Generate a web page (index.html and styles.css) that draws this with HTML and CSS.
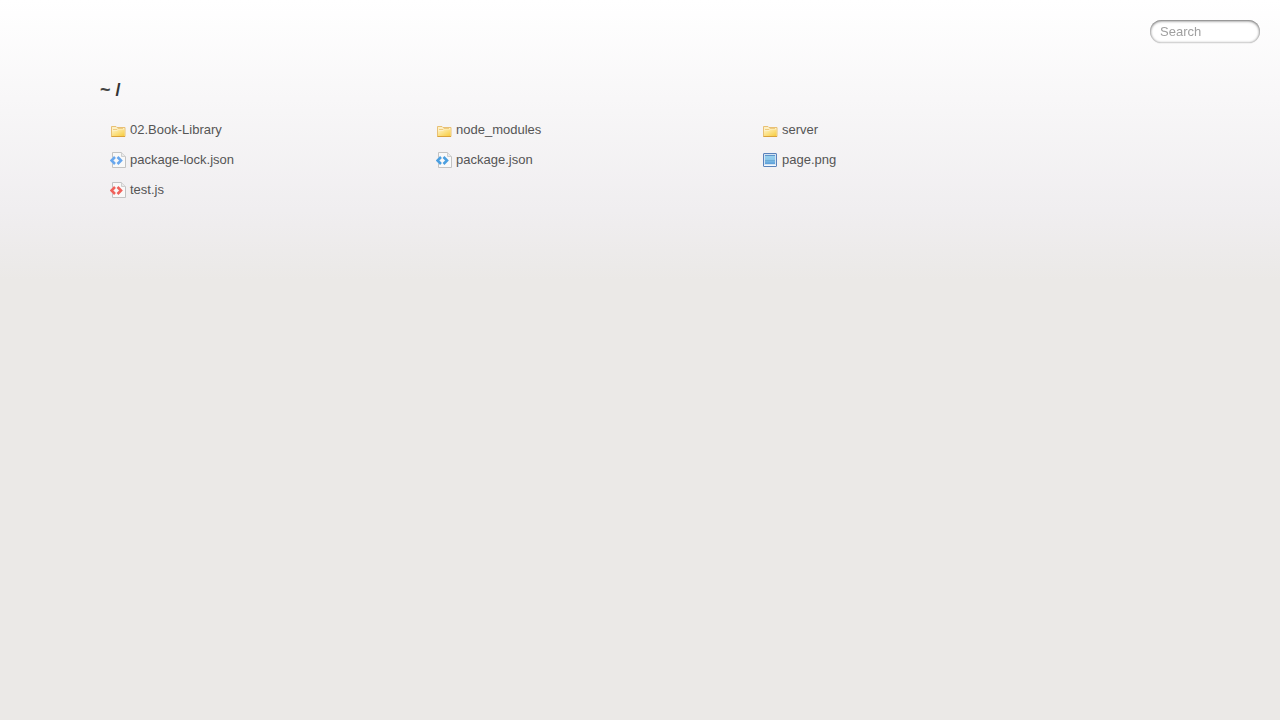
FILE: index.html
```html
<!DOCTYPE html>
<html lang="en">
<head>
<meta charset="utf-8">
<title>listing directory /</title>
<link rel="stylesheet" href="styles.css">
</head>
<body>
<svg class="sprites" aria-hidden="true">
  <defs>
    <linearGradient id="gold" x1="0" y1="0" x2="1" y2="1"><stop offset="0" stop-color="#fff3c4"/><stop offset="1" stop-color="#f7cc3e"/></linearGradient>
    <linearGradient id="sky" x1="0" y1="0" x2="0" y2="1"><stop offset="0" stop-color="#9bd3ef"/><stop offset=".5" stop-color="#8cc8ea"/><stop offset="1" stop-color="#5b9dd8"/></linearGradient>
    <symbol id="folder" viewBox="0 0 16 16">
      <path d="M1.500 14.500v-10h4.500l1 1h8v9z" fill="#fdf0c4" stroke="#e8c075"/>
      <path d="M3 7.500h4l1-1h5" fill="none" stroke="#eecb80"/>
      <path d="M2 14V9h5l1.500-1.500H14.500V14z" fill="url(#gold)"/>
      <path d="M1.500 14.500h13.500" stroke="#dba23a"/>
    </symbol>
    <symbol id="code" viewBox="0 0 16 16">
      <path d="M2.500.5h9l4 4v11h-13z" fill="#f9f9f9" stroke="#c3c3c3"/>
      <path d="M11.500.5v4h4" fill="#e9e9e9" stroke="#cfcfcf"/>
      <path d="M5 3v11L0 8.500z" fill="#f5f4f5"/>
      <path d="M5 5L1.500 8.500 5 12M7.500 5L11 8.500 7.500 12" fill="none" stroke="currentColor" stroke-width="2.600"/>
    </symbol>
    <symbol id="image" viewBox="0 0 16 16">
      <rect x="1.500" y="1.500" width="13" height="13" rx=".5" fill="#d3e3f3" stroke="#5a82bb"/>
      <path d="M3 3h10v9H3z" fill="url(#sky)"/>
      <path d="M3 3.500h10" stroke="#5f95ca"/>
      <path d="M3 8h10v1H3z" fill="#6dabd6"/>
      <path d="M2 13.500h12" stroke="#f4f9fd"/>
    </symbol>
  </defs>
</svg>
<input class="search" type="text" placeholder="Search" aria-label="Search" autocomplete="off">
<main>
  <h1 class="path"><a href="#">~</a> /</h1>
  <ul class="files">
    <li><a href="#"><svg class="icon"><use href="#folder"/></svg><span>02.Book-Library</span></a></li>
    <li><a href="#"><svg class="icon"><use href="#folder"/></svg><span>node_modules</span></a></li>
    <li><a href="#"><svg class="icon"><use href="#folder"/></svg><span>server</span></a></li>
    <li><a href="#"><svg class="icon json-lock"><use href="#code"/></svg><span>package-lock.json</span></a></li>
    <li><a href="#"><svg class="icon json"><use href="#code"/></svg><span>package.json</span></a></li>
    <li><a href="#"><svg class="icon"><use href="#image"/></svg><span>page.png</span></a></li>
    <li><a href="#"><svg class="icon js"><use href="#code"/></svg><span>test.js</span></a></li>
  </ul>
</main>
</body>
</html>
```
FILE: styles.css
```css
* {
  margin: 0;
  padding: 0;
  box-sizing: border-box;
}

body {
  padding: 80px 100px 76px;
  font: 13px "Liberation Sans", Arial, sans-serif;
  color: #555;
  background: #ebe9e7 linear-gradient(#fff, #f0eef0 75%, #ebe9e7) no-repeat;
}

a {
  color: inherit;
  text-decoration: none;
}

.sprites {
  position: absolute;
  width: 0;
  height: 0;
}

.search {
  position: fixed;
  top: 20px;
  right: 20px;
  width: 110px;
  height: 23px;
  padding: 0 10px;
  border: none;
  border-radius: 32px;
  outline: none;
  background: #fff;
  font: inherit;
  color: #555;
  box-shadow: inset 0 0 3px rgba(0, 0, 0, .3), inset 0 1px 3px rgba(0, 0, 0, .5), 0 1px 0 rgba(0, 0, 0, .04);
}

.search::placeholder {
  color: #a0a0a0;
}

.path {
  font-size: 18px;
  line-height: 20px;
  color: #343434;
}

.path a {
  color: #444;
}

.files {
  display: grid;
  grid-template-columns: repeat(3, 30%);
  grid-auto-rows: 28px;
  gap: 2px;
  padding-top: 16px;
  list-style: none;
}

.files a {
  display: flex;
  align-items: center;
  height: 28px;
  padding: 0 10px;
}

.files span {
  margin-left: 4px;
  line-height: 16px;
}

.icon {
  flex: none;
  width: 16px;
  height: 16px;
}

.json-lock {
  color: #68a7ee;
}

.json {
  color: #4b9fe0;
}

.js {
  color: #f0625c;
}
```
